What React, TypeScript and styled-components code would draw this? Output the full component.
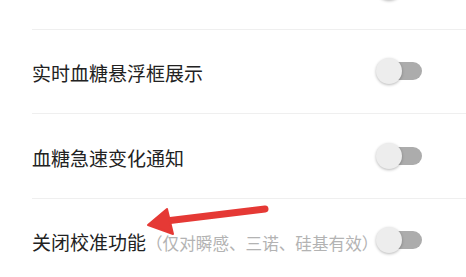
import styled, { createGlobalStyle } from 'styled-components';

const GlobalStyle = createGlobalStyle`
  html, body {
    margin: 0;
    padding: 0;
    background: #ffffff;
    overflow: hidden;
  }
  body {
    font-family: 'Noto Sans CJK SC', 'Noto Sans', sans-serif;
  }
`;

/*
 *  layout
 */
const Page = styled.div`
  position: relative;
  width: 466px;
  height: 277px;
  overflow: hidden;
  background: #fff;
`;

const List = styled.div`
  display: flex;
  flex-direction: column;
  margin-top: -55px;
`;

const Row = styled.div`
  position: relative;
  box-sizing: border-box;
  display: flex;
  align-items: center;
  height: 84.5px;
  padding: 2px 44px 0 32px;

  &::after {
    content: '';
    position: absolute;
    left: 32px;
    right: 0;
    bottom: 0;
    height: 1px;
    background: #efefef;
  }
`;

/*
 *  typography
 */
const Label = styled.span`
  flex: 1;
  display: flex;
  align-items: baseline;
  font-size: 19px;
  line-height: 1;
  color: #222;
  white-space: nowrap;
`;

const Hint = styled.span`
  font-size: 16.6px;
  color: #b3b3b3;
`;

/*
 *  switch
 */
const Track = styled.div`
  position: relative;
  width: 42px;
  height: 18px;
  margin-top: -3px;
  border-radius: 9px;
  background: #acacac;
`;

const Thumb = styled.div`
  position: absolute;
  left: -4px;
  top: -4px;
  width: 26px;
  height: 26px;
  border-radius: 50%;
  background: #ededed;
  box-shadow: 0 1px 3px rgba(0, 0, 0, 0.28);
`;

const Switch = () => (
  <Track>
    <Thumb />
  </Track>
);

/*
 *  annotation
 */
const Arrow = styled.svg`
  position: absolute;
  left: 0;
  top: 0;
  pointer-events: none;
`;

type Item = { label: string; hint?: string };

const items: Item[] = [
  { label: '血糖提醒' },
  { label: '实时血糖悬浮框展示' },
  { label: '血糖急速变化通知' },
  { label: '关闭校准功能', hint: '（仅对瞬感、三诺、硅基有效）' },
];

export default function App() {
  return (
    <Page>
      <GlobalStyle />
      <List>
        {items.map((item) => (
          <Row key={item.label}>
            <Label>
              {item.label}
              {item.hint && <Hint>{item.hint}</Hint>}
            </Label>
            <Switch />
          </Row>
        ))}
      </List>
      <Arrow width="466" height="277" viewBox="0 0 466 277">
        <line x1="166" y1="221" x2="265" y2="209" stroke="#e53935" strokeWidth="7" strokeLinecap="round" />
        <polygon points="148,225 167,209 173,234" fill="#e53935" stroke="#e53935" strokeWidth="2" strokeLinejoin="round" />
      </Arrow>
    </Page>
  );
}
